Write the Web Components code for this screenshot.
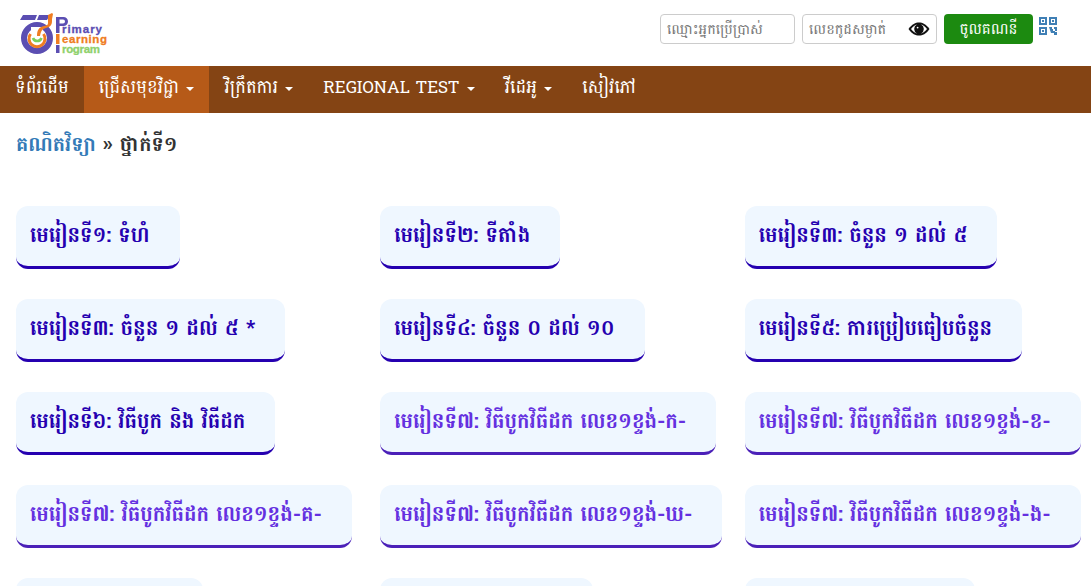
<!DOCTYPE html>
<html lang="km"><head><meta charset="utf-8"><title>Primary Learning Program</title>
<style>
html,body{margin:0;padding:0;background:#fff;overflow:hidden;height:586px}
body{font-family:Battambang,"Noto Sans Khmer","Liberation Serif",serif}
</style></head><body>
<site-header></site-header>
<site-nav>
<nav-item>ទំព័រដើម</nav-item>
<nav-item active caret>ជ្រើសមុខវិជ្ជា</nav-item>
<nav-item caret>វិក្រឹតការ</nav-item>
<nav-item caret latin>REGIONAL TEST</nav-item>
<nav-item caret>វីដេអូ</nav-item>
<nav-item>សៀវភៅ</nav-item>
</site-nav>
<bread-crumb></bread-crumb>
<lesson-grid>
<lesson-card>មេរៀនទី១: ទំហំ</lesson-card>
<lesson-card>មេរៀនទី២: ទីតាំង</lesson-card>
<lesson-card>មេរៀនទី៣: ចំនួន ១ ដល់ ៥</lesson-card>
<lesson-card>មេរៀនទី៣: ចំនួន ១ ដល់ ៥ *</lesson-card>
<lesson-card>មេរៀនទី៤: ចំនួន ០ ដល់ ១០</lesson-card>
<lesson-card>មេរៀនទី៥: ការប្រៀបធៀបចំនួន</lesson-card>
<lesson-card>មេរៀនទី៦: វិធីបូក និង វិធីដក</lesson-card>
<lesson-card light>មេរៀនទី៧: វិធីបូកវិធីដក លេខ១ខ្ទង់-ក-</lesson-card>
<lesson-card light>មេរៀនទី៧: វិធីបូកវិធីដក លេខ១ខ្ទង់-ខ-</lesson-card>
<lesson-card light>មេរៀនទី៧: វិធីបូកវិធីដក លេខ១ខ្ទង់-គ-</lesson-card>
<lesson-card light>មេរៀនទី៧: វិធីបូកវិធីដក លេខ១ខ្ទង់-ឃ-</lesson-card>
<lesson-card light>មេរៀនទី៧: វិធីបូកវិធីដក លេខ១ខ្ទង់-ង-</lesson-card>
<lesson-card light style="width:187px;padding:0">&nbsp;</lesson-card>
<lesson-card light style="width:213px;padding:0">&nbsp;</lesson-card>
<lesson-card light style="width:230px;padding:0">&nbsp;</lesson-card>
</lesson-grid>
<script>
function def(name,html){customElements.define(name,class extends HTMLElement{constructor(){super();this.attachShadow({mode:'open'}).innerHTML=html;}});}
const kh='Battambang,"Noto Sans Khmer","Liberation Serif",serif';
def('site-header',`<style>
:host{display:flex;height:66px;box-sizing:border-box;align-items:flex-start;justify-content:space-between;padding:0 33px 0 20px;font-family:${kh}}
svg.logo{margin-top:12px;display:block}
.r{display:flex;align-items:center;gap:7px;margin-top:14px;margin-right:1px}
.in{box-sizing:border-box;width:135px;height:30px;border:1px solid #ccc;border-radius:4px;font-size:14.400px;color:#777;padding:0 6px;display:flex;align-items:center;justify-content:space-between;background:#fff;white-space:nowrap}
.btn{box-sizing:border-box;width:89px;height:30px;background:#1c8a10;color:#fff;border-radius:4px;font-size:15px;display:flex;align-items:center;justify-content:center}
.qr{margin:-6px 0 0 -1px;display:block}
</style>
<svg class="logo" width="88" height="43" viewBox="0 0 88 43" aria-hidden="true">
<circle cx="17" cy="26" r="13" fill="none" stroke="#5b4eb2" stroke-width="6"/>
<path d="M3 3h14l-2 5H0ZM19 3h11l-3 5H17Z" fill="#5b4eb2"/>
<path d="M11 15h12v5H11Z" fill="#fff"/>
<path d="M10.500 22a8 8 0 1 0 13 0" fill="none" stroke="#ef7d22" stroke-width="3"/>
<path d="M17 24c0-6 2-9 7-10 3-1 4-1 4-3V3l4-2 1 1-1 5v2c0 4-2 6-6 7-4 1-5 3-6 8Z" fill="#ef7d22"/>
<path d="M13 26a4.500 4.500 0 0 0 8.500 0" fill="none" stroke="#7ccf5c" stroke-width="2.600"/>
<rect x="36" y="5" width="3.500" height="16" fill="#5b4eb2"/>
<path d="M39 5h4.500a4.500 4.500 0 0 1 0 9H39v-2.500h4a2 2 0 0 0 0-4h-4Z" fill="#5b4eb2"/>
<rect x="36" y="22" width="3.500" height="10" fill="#ef7d22"/><rect x="36" y="33" width="3.500" height="8" fill="#5b4eb2"/>
<text x="42" y="21" font-family="Liberation Sans" font-weight="700" font-size="11.500" fill="#5b4eb2" stroke="#5b4eb2" stroke-width=".3" textLength="40">rimary</text>
<text x="42" y="31" font-family="Liberation Sans" font-weight="700" font-size="11.500" fill="#ef7d22" stroke="#ef7d22" stroke-width=".3" textLength="45">earning</text>
<text x="42" y="41" font-family="Liberation Sans" font-weight="700" font-size="11.500" fill="#8fd16c" stroke="#8fd16c" stroke-width=".3" textLength="38">rogram</text>
</svg>
<div class="r">
<div class="in">ឈ្មោះអ្នកប្រើប្រាស់</div>
<div class="in">លេខកូដសម្ងាត់
<svg width="22" height="14" viewBox="0 0 22 14"><path d="M0.500 7C4 2 7.500 0.500 11 0.500S18 2 21.500 7C18 12 14.500 13.500 11 13.500S4 12 0.500 7Z" fill="#111"/><path d="M3 7c2-2.500 4-4 6-4.500a5 5 0 0 0 0 9C7 11 5 9.500 3 7ZM19 7c-2 2.500-4 4-6 4.500a5 5 0 0 0 0-9c2 .5 4 2 6 4.500Z" fill="#fff"/><circle cx="11" cy="7" r="3.600" fill="#111"/><circle cx="9.600" cy="5.600" r=".9" fill="#fff"/></svg></div>
<div class="btn">ចូលគណនី</div>
<svg class="qr" width="18" height="18" viewBox="0 0 18 18" fill="#3f7fb5"><path fill-rule="evenodd" d="M0 0h8v8H0ZM2 2v4h4V2ZM10 0h8v8h-8ZM12 2v4h4V2ZM0 10h8v8H0ZM2 12v4h4v-4Z"/><rect x="3" y="3" width="2" height="2"/><rect x="13" y="3" width="2" height="2"/><rect x="3" y="13" width="2" height="2"/><path d="M10 10h3v2h2v-2h3v4h-2v-2h-2v2h2v2h-4ZM15 15h3v3h-3Z"/></svg>
</div>`);
def('site-nav',`<style>:host{display:flex;height:47px;background:#844414;font-family:${kh}}</style><slot></slot>`);
customElements.define('nav-item',class extends HTMLElement{constructor(){super();const c=this.hasAttribute('caret');this.attachShadow({mode:'open'}).innerHTML=`<style>
:host{display:flex;align-items:center;padding:0 15px 4px;color:#fff;font-size:18px;white-space:nowrap;gap:7.300px}
:host([latin]){font-size:17px}
:host([active]){background:#b65a18}
i{display:block;width:0;height:0;border:4px solid transparent;border-top-color:#fff;border-bottom:0;margin-top:3px}
</style><slot></slot>${c?'<i></i>':''}`}});
def('bread-crumb',`<style>:host{display:block;padding:16px 16px 0;height:93px;box-sizing:border-box;font-family:${kh};font-size:20.600px;font-weight:700;color:#333;line-height:32px}
span{color:#337ab7}</style><span>គណិតវិទ្យា</span> » ថ្នាក់ទី១`);
def('lesson-grid',`<style>:host{display:grid;grid-template-columns:repeat(3,335.330px);column-gap:29px;row-gap:30px;padding-left:16px}</style><slot></slot>`);
def('lesson-card',`<style>
:host{display:block;justify-self:start;box-sizing:border-box;height:63px;background:#eff7ff;border-radius:12px;border-bottom:3px solid #2500b0;color:#2500b0;font-family:${kh};font-size:21px;font-weight:700;line-height:58px;padding:0 30px 0 14px;white-space:nowrap;overflow:hidden}
:host([light]){color:#6430e0;border-bottom-color:#4b20b8}
</style><slot></slot>`);
</script>
</body></html>
